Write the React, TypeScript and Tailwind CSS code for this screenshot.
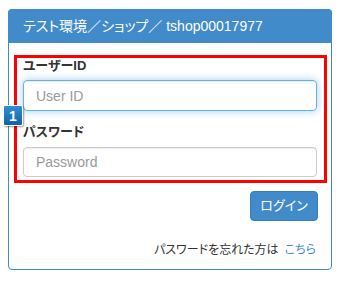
import React from "react";

const jp = { fontFamily: '"Liberation Sans", "Noto Sans CJK JP", sans-serif' };

export default function App() {
  return (
    <div className="w-[341px] h-[282px] bg-white pl-[8px] pt-[9px]" style={jp}>
      <div className="relative w-[324px] h-[261px] border border-[#428bca] rounded-[4px] flex flex-col">
        <div className="h-[34px] -mx-px -mt-px bg-[#428bca] rounded-t-[4px] flex items-center pl-[15px] text-white text-[14px] [font-feature-settings:'palt']">
          テスト環境／ショップ／ tshop00017977
        </div>
        <div className="ml-[5px] mt-[12px] w-[313px] h-[128px] border-[3px] border-[#ff0000] pl-[6px] pr-[7px] flex flex-col">
          <div className="h-[16px] leading-[16px] text-[13px] font-bold text-[#333] [font-feature-settings:'palt']">
            ユーザーID
          </div>
          <input
            className="mt-[6px] h-[31px] w-full border border-[#66afe9] rounded-[4px] px-[12px] text-[14px] text-[#555] placeholder:text-[#999] outline-none shadow-[inset_0_1px_1px_rgba(0,0,0,0.075),0_0_8px_rgba(102,175,233,0.6)]"
            placeholder="User ID"
          />
          <div className="mt-[13px] h-[16px] leading-[16px] text-[13px] font-bold text-[#333] [font-feature-settings:'palt']">
            パスワード
          </div>
          <input
            className="mt-[7px] h-[30px] w-full border border-[#ccc] rounded-[4px] px-[12px] text-[14px] text-[#555] placeholder:text-[#999] outline-none shadow-[inset_0_1px_1px_rgba(0,0,0,0.075)]"
            placeholder="Password"
            type="password"
          />
        </div>
        <div className="flex justify-end pr-[13px] mt-[8px]">
          <button className="w-[68px] h-[30px] bg-[#428bca] border border-[#357ebd] rounded-[4px] text-white text-[13px] [font-feature-settings:'palt']">
            ログイン
          </button>
        </div>
        <div className="flex justify-end pr-[15px] mt-[23px] text-[12px] text-[#333] leading-none [font-feature-settings:'palt']">
          <span>パスワードを忘れた方は</span>
          <span className="ml-[6px] text-[#428bca]">こちら</span>
        </div>
        <div className="absolute left-[-6px] top-[95px] w-[20px] h-[21px] rounded-[2px] border border-white bg-gradient-to-b from-[#2f8fd6] to-[#1462a6] shadow-[1px_1px_2px_rgba(0,0,0,0.4)] flex items-center justify-center text-white font-bold text-[14px] leading-none">
          1
        </div>
      </div>
    </div>
  );
}
